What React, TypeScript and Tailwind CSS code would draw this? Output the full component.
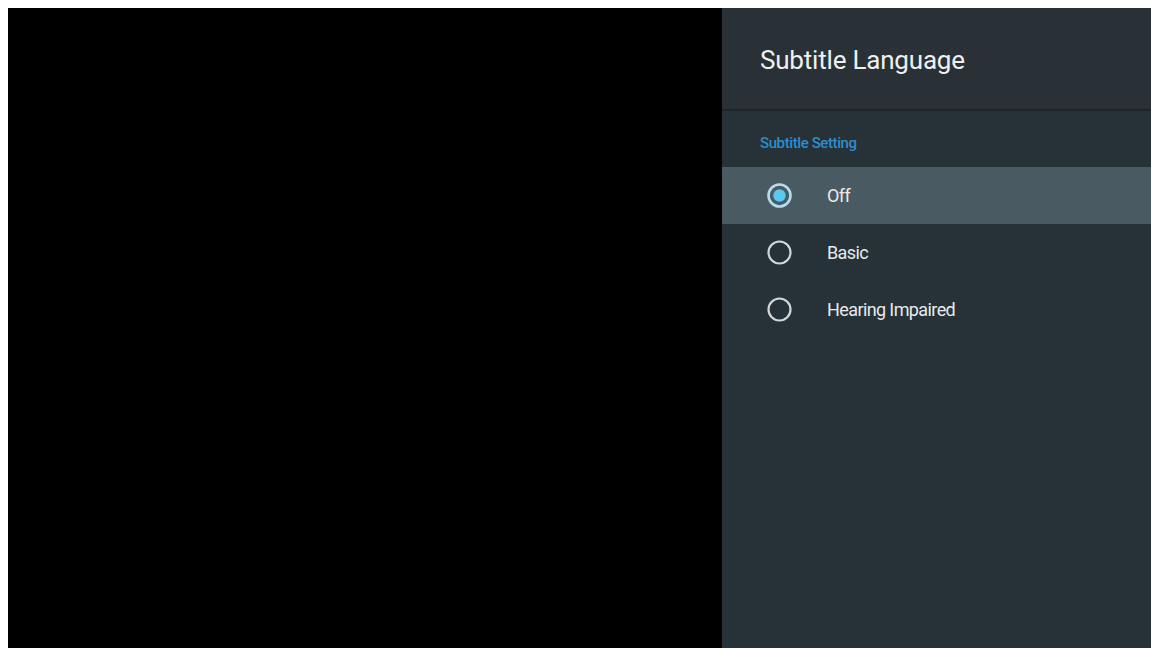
import React from "react"

const options = ["Off", "Basic", "Hearing Impaired"]

function Radio({ checked }: { checked: boolean }) {
  if (checked) {
    return (
      <svg width="25" height="25" viewBox="0 0 25 25" className="shrink-0">
        <circle cx="12.5" cy="12.5" r="11" fill="none" stroke="#b3dcef" strokeWidth="2.6" />
        <circle cx="12.5" cy="12.5" r="6.2" fill="#5cc6f5" />
      </svg>
    )
  }
  return (
    <svg width="25" height="25" viewBox="0 0 25 25" className="shrink-0">
      <circle cx="12.5" cy="12.5" r="11" fill="none" stroke="#d4d6d7" strokeWidth="2.2" />
    </svg>
  )
}

export default function App() {
  const selected = 0

  return (
    <div className="flex h-[648px] w-[1151px] bg-white pl-2 pt-2 font-['Roboto',sans-serif]">
      <div className="h-full w-[714px] bg-black" />
      <div className="flex h-full flex-1 flex-col bg-[#263238]">
        <div className="flex h-[103px] items-center border-b-2 border-[#1e2428] bg-[#2a3136] pl-[38px] pt-[2px]">
          <h1 className="text-[26px] leading-none tracking-[-0.2px] text-[#eef0f1]">Subtitle Language</h1>
        </div>
        <div className="h-[56px] pl-[38px] pt-[22px] text-[15px] font-medium leading-[20px] tracking-[-0.4px] text-[#2e8dca]">
          Subtitle Setting
        </div>
        <div className="flex flex-col">
          {options.map((opt, i) => (
            <div
              key={opt}
              className={
                i === selected
                  ? "flex h-[57px] items-center gap-[35px] bg-[#4a5a62] pl-[45px]"
                  : "flex h-[57px] items-center gap-[35px] pl-[45px]"
              }
            >
              <Radio checked={i === selected} />
              <span className="text-[18px] tracking-[-0.6px] text-[#e8eaeb]">{opt}</span>
            </div>
          ))}
        </div>
      </div>
    </div>
  )
}
